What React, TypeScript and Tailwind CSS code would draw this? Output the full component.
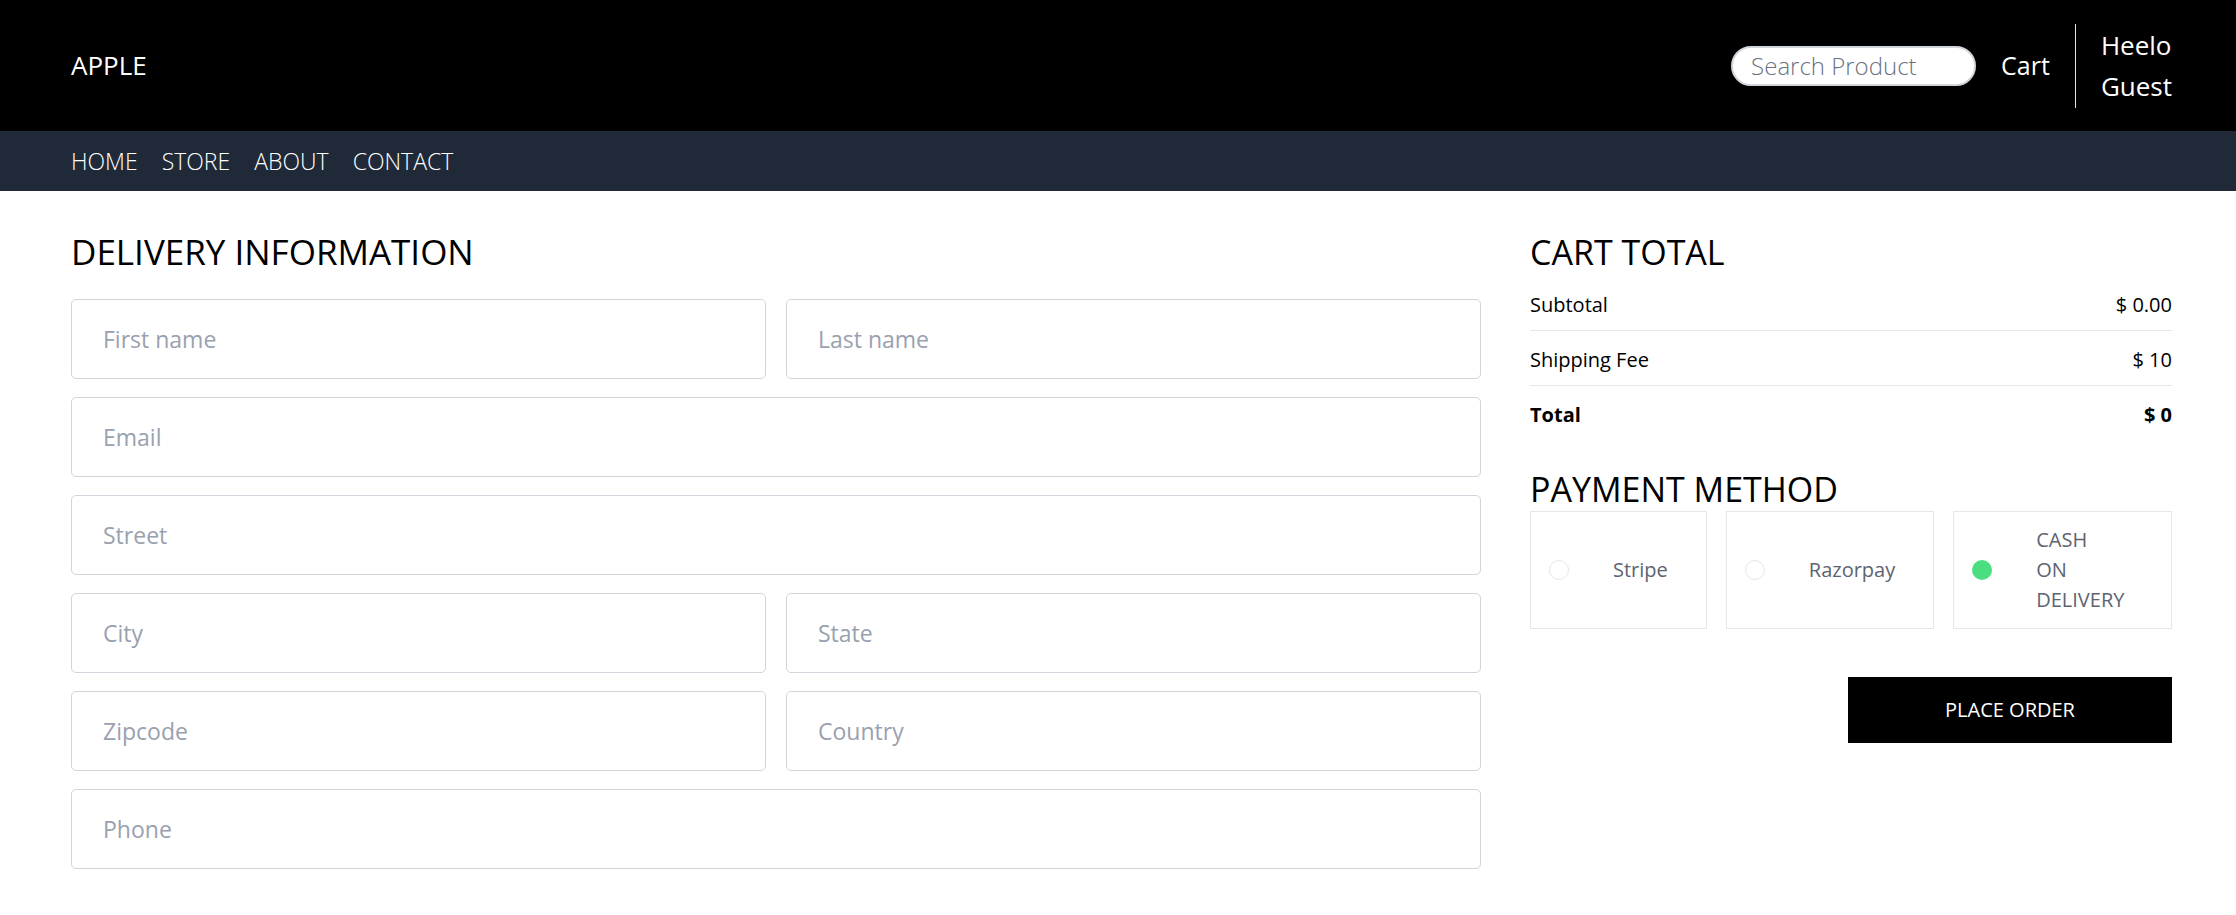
import { useState } from 'react'

const inputCls =
  'h-[80px] w-full rounded-[5px] border border-gray-300 bg-white px-[31px] text-[23px] text-gray-800 outline-none placeholder:text-gray-400'

function Field({ placeholder }: { placeholder: string }) {
  return <input type="text" placeholder={placeholder} className={inputCls} />
}

export default function App() {
  const [method, setMethod] = useState('cod')

  const methods = [
    { id: 'stripe', label: <>Stripe</> },
    { id: 'razorpay', label: <>Razorpay</> },
    {
      id: 'cod',
      label: (
        <>
          CASH
          <br />
          ON
          <br />
          DELIVERY
        </>
      ),
    },
  ]

  return (
    <div className="min-h-screen bg-white font-['Open_Sans',sans-serif] text-black">
      {/* top bar */}
      <header className="flex h-[131px] items-center justify-between bg-black pl-[71px] pr-[64px]">
        <h1 className="text-[26px] text-white">APPLE</h1>
        <div className="flex items-center gap-[25px]">
          <input
            type="text"
            placeholder="Search Product"
            className="h-[40px] w-[245px] rounded-full border-2 border-gray-300 bg-white px-[18px] text-[24px] font-light text-gray-700 outline-none placeholder:text-gray-500"
          />
          <span className="text-[25px] text-white">Cart</span>
          <div className="h-[84px] w-px bg-gray-200" />
          <div className="flex flex-col text-[26px] leading-[41px] text-white">
            <span>Heelo</span>
            <span>Guest</span>
          </div>
        </div>
      </header>

      <nav className="flex h-[60px] items-center gap-[24px] bg-[#202937] pl-[71px] text-[23px] font-light text-white">
        <a href="#">HOME</a>
        <a href="#">STORE</a>
        <a href="#">ABOUT</a>
        <a href="#">CONTACT</a>
      </nav>

      <main className="flex gap-[49px] pl-[71px] pr-[64px] pt-[39px]">
        {/* delivery info */}
        <section className="flex-1">
          <h2 className="mb-[25px] text-[35px] leading-[44px]">DELIVERY INFORMATION</h2>
          <form className="flex flex-col gap-[18px]" onSubmit={(e) => e.preventDefault()}>
            <div className="grid grid-cols-2 gap-[20px]">
              <Field placeholder="First name" />
              <Field placeholder="Last name" />
            </div>
            <Field placeholder="Email" />
            <Field placeholder="Street" />
            <div className="grid grid-cols-2 gap-[20px]">
              <Field placeholder="City" />
              <Field placeholder="State" />
            </div>
            <div className="grid grid-cols-2 gap-[20px]">
              <Field placeholder="Zipcode" />
              <Field placeholder="Country" />
            </div>
            <Field placeholder="Phone" />
          </form>
        </section>

        {/* totals + payment */}
        <aside className="flex w-[642px] shrink-0 flex-col">
          <h2 className="text-[34px] leading-[44px]">CART TOTAL</h2>
          <div className="mt-[17px] flex flex-col text-[20px] leading-[28px]">
            <div className="flex justify-between">
              <span>Subtotal</span>
              <span>$ 0.00</span>
            </div>
            <hr className="mb-[15px] mt-[11px] border-gray-200" />
            <div className="flex justify-between">
              <span>Shipping Fee</span>
              <span>$ 10</span>
            </div>
            <hr className="mb-[15px] mt-[11px] border-gray-200" />
            <div className="flex justify-between font-bold">
              <span>Total</span>
              <span>$ 0</span>
            </div>
          </div>

          <h2 className="mt-[38px] text-[34px] leading-[44px]">PAYMENT METHOD</h2>
          <div className="flex gap-[19px]">
            {methods.map((m) => (
              <button
                key={m.id}
                type="button"
                onClick={() => setMethod(m.id)}
                className={`flex items-center border border-gray-200 px-[18px] py-[13px] text-left ${m.id === 'cod' ? 'min-w-0 flex-1' : ''}`}
              >
                <span
                  className={`h-[20px] w-[20px] shrink-0 rounded-full ${method === m.id ? 'bg-[#4ade80]' : 'border border-gray-200'}`}
                />
                <span className="ml-[44px] mr-[20px] text-[20px] leading-[30px] text-[#5d6470]">{m.label}</span>
              </button>
            ))}
          </div>

          <button
            type="button"
            className="mt-[48px] h-[66px] w-[324px] self-end bg-black text-[20px] text-white"
          >
            PLACE ORDER
          </button>
        </aside>
      </main>
    </div>
  )
}
